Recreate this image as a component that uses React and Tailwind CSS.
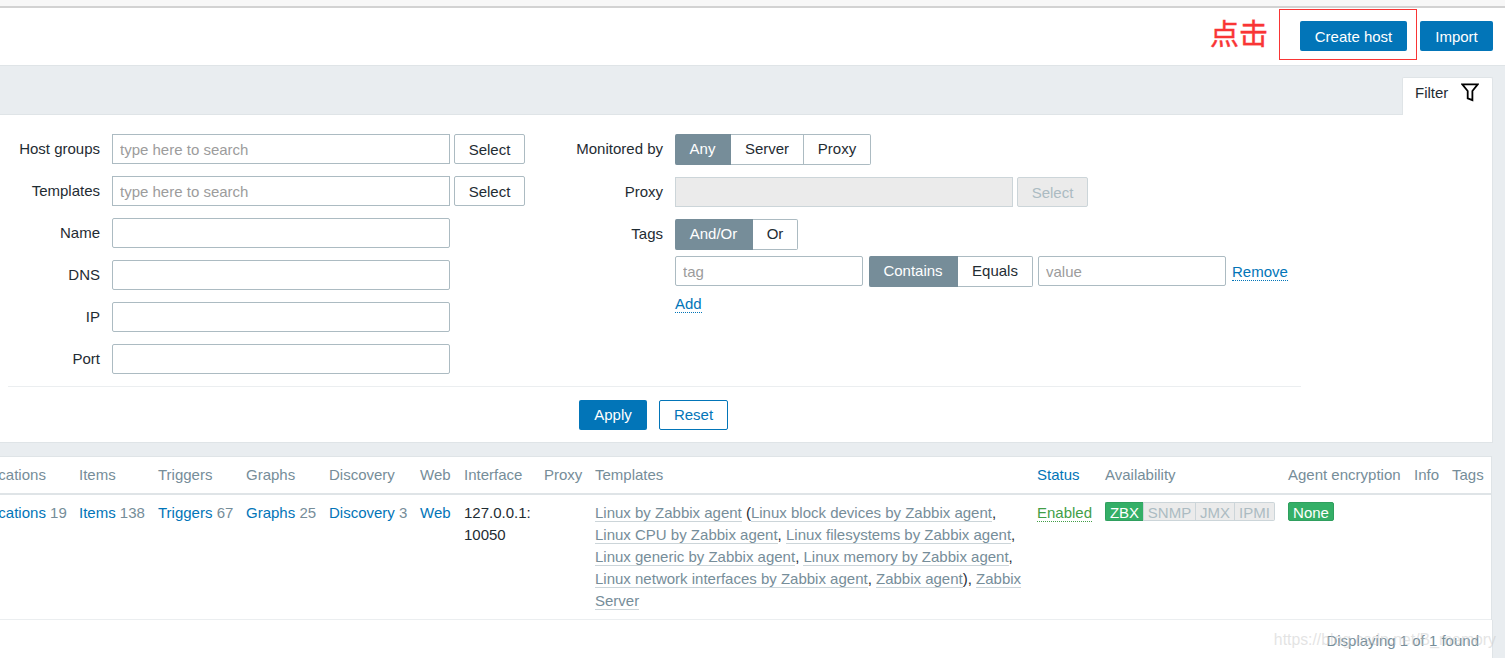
import React from 'react';

const leftFields = [
  { label: 'Host groups', select: true },
  { label: 'Templates', select: true },
  { label: 'Name' },
  { label: 'DNS' },
  { label: 'IP' },
  { label: 'Port' },
];

const inputBase = 'block h-[30px] border border-[#acbbc2] bg-white px-[7px] pt-px outline-none placeholder:text-[#9c9c9c]';

const SelectButton = ({ disabled }) => (
  <button
    disabled={disabled}
    className={`ml-1 h-[30px] w-[71px] rounded-[2px] border pt-[2px] ${
      disabled ? 'border-[#ccd5d9] bg-[#ebebeb] text-[#acbbc2]' : 'border-[#acbbc2] bg-white text-[#1f2c33]'
    }`}
  >
    Select
  </button>
);

// First option is the selected one
const Segmented = ({ options }) => (
  <div className="flex h-[31px] shrink-0">
    {options.map((option, i) => (
      <button
        key={option.label}
        className={`${option.width} h-[31px] border-y border-r pb-px last:rounded-r-[2px] ${
          i === 0
            ? 'rounded-l-[2px] border-[#768d99] bg-[#768d99] text-white'
            : 'border-[#acbbc2] bg-white text-[#1f2c33]'
        }`}
      >
        {option.label}
      </button>
    ))}
  </div>
);

const DottedLink = ({ children, className }) => (
  <a className={`block h-[17px] border-b border-dotted border-[#0275b8] leading-[15px] text-[#0275b8] ${className}`}>
    {children}
  </a>
);

const TemplateLink = ({ children }) => (
  <a className="border-b border-[#ccd5d9] text-[#768d99]">{children}</a>
);

const CountLink = ({ label, count }) => (
  <>
    <a className="text-[#0275b8]">{label}</a>
    {count && <span className="text-[#768d99]"> {count}</span>}
  </>
);

const Header = () => (
  <header className="flex h-[58px] items-start justify-end border-b border-[#dfe4e7] bg-white pt-px pr-3">
    <span className="mr-[11px] font-['Noto_Sans_CJK_SC',sans-serif] text-[29px] leading-[47px] text-[#f93535] [-webkit-text-stroke:0.4px_#f93535]">
      点击
    </span>
    <div className="flex h-[51px] w-[138px] border border-[#f93535] pt-[11px] pl-5">
      <button className="h-[30px] w-[107px] rounded-[2px] bg-[#0275b8] pt-[2px] text-white">Create host</button>
    </div>
    <button className="mt-3 ml-[3px] h-[30px] w-[73px] rounded-[2px] bg-[#0275b8] pt-[2px] text-white">Import</button>
  </header>
);

const FilterPanel = () => (
  <>
    <div className="flex h-12 items-end justify-end pr-3">
      <div className="relative top-px flex h-[38px] w-[91px] rounded-t-[2px] border border-b-0 border-[#dfe4e7] bg-white pt-1 pl-3">
        <span className="leading-[22px]">Filter</span>
        <svg className="mt-px ml-[13px] h-[19px] w-[18px]" viewBox="0 0 18 19" fill="none" stroke="black" strokeWidth="1.8">
          <path d="M1.3 1.4H16.7L11.4 8V17.1L6.7 15.3V8Z" />
        </svg>
      </div>
    </div>
    <section className="mr-3 h-[329px] border-y border-r border-[#dfe4e7] bg-white pt-[19px]">
      <div className="flex h-[252px]">
        <div className="flex w-[576px] flex-col gap-3">
          {leftFields.map((field) => (
            <div key={field.label} className="flex h-[30px]">
              <label className="w-[100px] text-right leading-[30px]">{field.label}</label>
              <input
                className={`${inputBase} ml-3 w-[338px] ${field.select ? '' : 'rounded-[2px]'}`}
                placeholder={field.select ? 'type here to search' : undefined}
              />
              {field.select && <SelectButton />}
            </div>
          ))}
        </div>
        <div>
          <div className="flex h-[31px]">
            <label className="mr-3 w-[87px] text-right leading-[30px]">Monitored by</label>
            <Segmented
              options={[
                { label: 'Any', width: 'w-14' },
                { label: 'Server', width: 'w-[73px]' },
                { label: 'Proxy', width: 'w-[67px]' },
              ]}
            />
          </div>
          <div className="mt-3 flex h-[30px]">
            <label className="mr-3 w-[87px] text-right leading-[30px]">Proxy</label>
            <div className="w-[338px] border border-[#ccd5d9] bg-[#ebebeb]" />
            <SelectButton disabled />
          </div>
          <div className="mt-3 flex">
            <label className="mr-3 w-[87px] text-right leading-[30px]">Tags</label>
            <div>
              <Segmented
                options={[
                  { label: 'And/Or', width: 'w-[78px]' },
                  { label: 'Or', width: 'w-[45px]' },
                ]}
              />
              <div className="mt-[6px] flex">
                <input className={`${inputBase} mr-[6px] w-[188px] rounded-[2px]`} placeholder="tag" />
                <Segmented
                  options={[
                    { label: 'Contains', width: 'w-[89px]' },
                    { label: 'Equals', width: 'w-[75px]' },
                  ]}
                />
                <input className={`${inputBase} mr-[6px] ml-[5px] w-[188px] rounded-[2px]`} placeholder="value" />
                <DottedLink className="mt-2">Remove</DottedLink>
              </div>
              <div className="mt-[9px] flex">
                <DottedLink>Add</DottedLink>
              </div>
            </div>
          </div>
        </div>
      </div>
      <div className="ml-2 flex w-[1293px] justify-center gap-3 border-t border-[#ebeef0] pt-[13px] pr-[2px]">
        <button className="h-[30px] w-[68px] rounded-[2px] bg-[#0275b8] text-white">Apply</button>
        <button className="h-[30px] w-[69px] rounded-[2px] border border-[#0275b8] text-[#0275b8]">Reset</button>
      </div>
    </section>
  </>
);

const AvailabilityIcons = () => (
  <div className="flex h-[19px] w-[170px] text-[#acbbc2]">
    <span className="w-[38px] rounded-l-[2px] border border-r-0 border-[#2f9f5e] bg-[#34af67] text-center leading-[20px] text-white">ZBX</span>
    <span className="w-[53px] border border-[#ccd5d9] bg-[#ebebeb] text-center leading-[20px]">SNMP</span>
    <span className="w-[39px] border-y border-r border-[#ccd5d9] bg-[#ebebeb] text-center leading-[20px]">JMX</span>
    <span className="w-10 rounded-r-[2px] border-y border-r border-[#ccd5d9] bg-[#ebebeb] text-center leading-[20px]">IPMI</span>
  </div>
);

// The table is scrolled to the right, so its first column is partly hidden
const HostTable = () => (
  <section className="mt-[13px] mr-[13px] border-t border-r border-[#dfe4e7] bg-white">
    <table className="-ml-[35px] w-[1526px] table-fixed border-collapse text-left">
      <colgroup>
        <col className="w-[114px]" />
        <col className="w-[79px]" />
        <col className="w-[88px]" />
        <col className="w-[83px]" />
        <col className="w-[91px]" />
        <col className="w-11" />
        <col className="w-20" />
        <col className="w-[51px]" />
        <col className="w-[442px]" />
        <col className="w-[68px]" />
        <col className="w-[183px]" />
        <col className="w-[126px]" />
        <col className="w-[38px]" />
        <col />
      </colgroup>
      <thead>
        <tr className="h-[37px] border-b-2 border-[#dfe4e7] whitespace-nowrap text-[#768d99] [&>th]:p-0 [&>th]:font-normal">
          <th>Applications</th>
          <th>Items</th>
          <th>Triggers</th>
          <th>Graphs</th>
          <th>Discovery</th>
          <th>Web</th>
          <th>Interface</th>
          <th>Proxy</th>
          <th>Templates</th>
          <th className="text-[#0275b8]">Status</th>
          <th>Availability</th>
          <th>Agent encryption</th>
          <th>Info</th>
          <th>Tags</th>
        </tr>
      </thead>
      <tbody>
        <tr className="h-[125px] border-b border-[#ebeef0] align-top leading-[22px] [&>td]:px-0 [&>td]:pt-[7px]">
          <td className="whitespace-nowrap"><CountLink label="Applications" count="19" /></td>
          <td><CountLink label="Items" count="138" /></td>
          <td><CountLink label="Triggers" count="67" /></td>
          <td><CountLink label="Graphs" count="25" /></td>
          <td><CountLink label="Discovery" count="3" /></td>
          <td><CountLink label="Web" /></td>
          <td>127.0.0.1:<br />10050</td>
          <td />
          <td>
            <TemplateLink>Linux by Zabbix agent</TemplateLink>
            {' ('}
            <TemplateLink>Linux block devices by Zabbix agent</TemplateLink>,<br />
            <TemplateLink>Linux CPU by Zabbix agent</TemplateLink>
            {', '}
            <TemplateLink>Linux filesystems by Zabbix agent</TemplateLink>,<br />
            <TemplateLink>Linux generic by Zabbix agent</TemplateLink>
            {', '}
            <TemplateLink>Linux memory by Zabbix agent</TemplateLink>,<br />
            <TemplateLink>Linux network interfaces by Zabbix agent</TemplateLink>
            {', '}
            <TemplateLink>Zabbix agent</TemplateLink>
            {'), '}
            <TemplateLink>Zabbix<br />Server</TemplateLink>
          </td>
          <td>
            <a className="border-b border-dotted border-[#429e47] text-[#429e47]">Enabled</a>
          </td>
          <td><AvailabilityIcons /></td>
          <td>
            <span className="block h-[19px] w-[46px] rounded-[2px] border border-[#2f9f5e] bg-[#34af67] text-center leading-[20px] text-white">None</span>
          </td>
          <td />
          <td />
        </tr>
      </tbody>
    </table>
  </section>
);

export default function App() {
  return (
    <div className="relative h-[658px] w-[1505px] overflow-hidden bg-[#e9edf0] font-['Liberation_Sans',Arial,sans-serif] text-[15px] text-[#1f2c33]">
      <div className="h-2 border-b-2 border-[#d2d2d2] bg-[#f7f7f7]" />
      <Header />
      <FilterPanel />
      <HostTable />
      <div className="mr-3 h-[39px] border-r border-[#dfe4e7] bg-white pt-[10px] pr-[13px] text-right leading-[22px] text-[#768d99]">
        Displaying 1 of 1 found
      </div>
      <span className="absolute top-[630px] right-[9px] text-[15.8px] leading-5 text-[#c8c8c8]/50">https://blog.csdn.net/B_memory</span>
    </div>
  );
}
